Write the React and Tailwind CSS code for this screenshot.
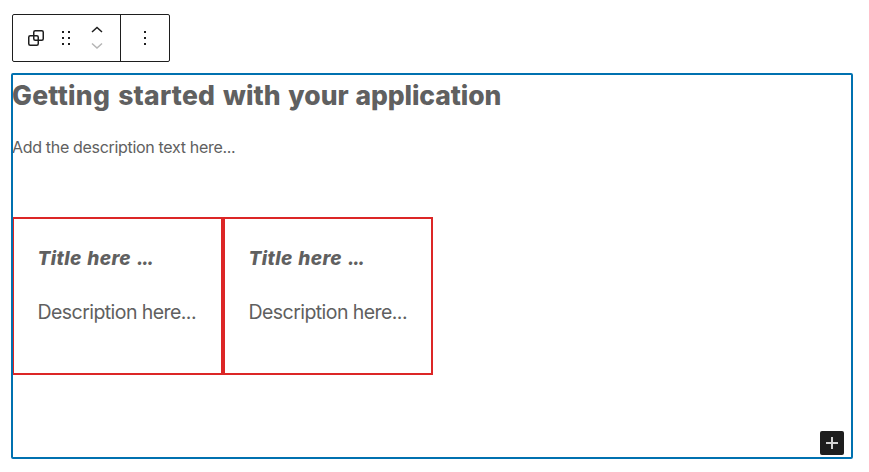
const DuplicateIcon = () => (
  <svg width="24" height="24" viewBox="0 0 24 24" fill="none" stroke="#1e1e1e" strokeWidth="1.5">
    <rect x="4.75" y="9.75" width="9.5" height="9.5" rx="1.5" />
    <rect x="9.75" y="4.75" width="9.5" height="9.5" rx="1.5" />
  </svg>
);

const DragIcon = () => (
  <svg width="18" height="18" viewBox="0 0 18 18" fill="#1e1e1e">
    <path d="M5 4h2V2H5v2zm6-2v2h2V2h-2zm-6 8h2V8H5v2zm6 0h2V8h-2v2zm-6 6h2v-2H5v2zm6 0h2v-2h-2v2z" />
  </svg>
);

const Card = () => (
  <div className="h-[158px] border-2 border-[#dc2626] pl-[23.5px] pt-6">
    <h3 className="h-8 w-max whitespace-pre font-['Inter',sans-serif] text-[19px] font-extrabold italic leading-8 tracking-[0.35px] [word-spacing:1.3px]">
      Title here <span className="tracking-[-1.4px]">...</span>
    </h3>
    <p className="mt-[21px] h-8 w-max font-['Inter',sans-serif] text-[19.5px] leading-8 tracking-[-0.56px]">
      Description here...
    </p>
  </div>
);

export default function App() {
  return (
    <main className="h-[472px] w-[869px] overflow-hidden bg-white pl-3 pt-[14px] text-[#606060]">
      <div className="flex h-12 w-[158px] rounded-[2px] border border-[#1e1e1e]">
        <div className="flex w-[108px] items-center border-r border-[#1e1e1e] pl-[11px]">
          <DuplicateIcon />
          <span className="ml-[9px]"><DragIcon /></span>
          <svg className="ml-[16px]" width="12" height="24" viewBox="0 0 12 24" fill="none" strokeWidth="1.5">
            <path d="M1 6 6 1.5 11 6" stroke="#1e1e1e" />
            <path d="M1 17.5 6 22 11 17.5" stroke="#b5b5b5" />
          </svg>
        </div>
        <div className="flex flex-1 items-center justify-center">
          <svg width="24" height="24" viewBox="0 0 24 24" fill="#1e1e1e">
            <path d="M11 5h2v2h-2zM11 11h2v2h-2zM11 17h2v2h-2z" />
          </svg>
        </div>
      </div>

      <section className="relative mt-[12px] h-[384px] w-[840px] after:pointer-events-none after:absolute after:-inset-px after:rounded-[2px] after:border-2 after:border-[#0071b0] after:content-['']">
        <h1 className="h-[43px] w-max font-['Inter',sans-serif] text-[26.5px] font-extrabold leading-[42px] [word-spacing:2px]">
          <span className="tracking-[0.25px]">Getting started</span> with your <span className="-ml-px tracking-[-0.1px]">application</span>
        </h1>
        <p className="mt-[18px] h-6 w-max font-['Inter',sans-serif] text-base leading-6 tracking-[-0.32px]">
          Add the description text here...
        </p>
        <div className="mt-[58px] grid w-[421px] grid-cols-[211px_210px]">
          <Card />
          <Card />
        </div>
        <button aria-label="Add block" className="absolute bottom-[3px] right-2 flex size-6 items-center justify-center rounded-[2px] bg-[#1e1e1e]">
          <svg width="24" height="24" viewBox="0 0 24 24" fill="#d4d4d4">
            <path d="M11 6h2v5h5v2h-5v5h-2v-5H6v-2h5z" />
          </svg>
        </button>
      </section>
    </main>
  );
}
